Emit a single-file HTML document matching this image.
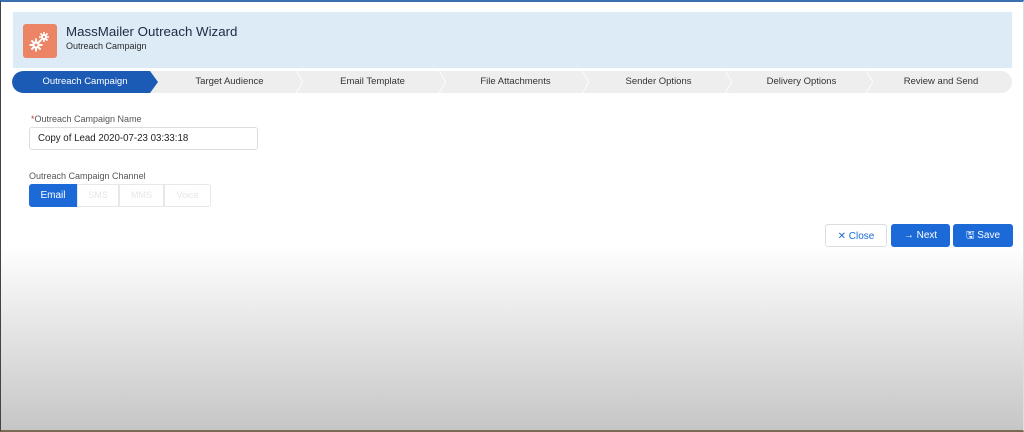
<!DOCTYPE html>
<html><head><style>
*{margin:0;padding:0;box-sizing:border-box}
body{width:1024px;height:432px;overflow:hidden;font-family:"Liberation Sans",sans-serif;position:relative;
background:linear-gradient(#fff 0,#fff 245px,#c6c6c6 430px);}
.frame{position:absolute;inset:0;border-left:1px solid #444;border-top:2px solid #3a6fb0;border-right:1px solid #ddd;border-bottom:2px solid #7a6a55}
.hdr{position:absolute;left:13px;top:12px;width:999px;height:56px;background:#dcebf5}
.ico{position:absolute;left:23px;top:24px;width:34px;height:34px;background:#ec8466;border-radius:3px}
.t1{position:absolute;left:66px;top:24px;font-size:13.3px;color:#1f2a44}
.t2{position:absolute;left:66px;top:41px;font-size:9px;color:#2b2b2b}
.path{position:absolute;left:12px;top:71px;width:1000px;height:22px;background:#eeeeee;border-radius:11px;overflow:hidden}
.step{position:absolute;top:0;height:22px;line-height:22px;font-size:9.5px;color:#333;text-align:center}
.act{position:absolute;left:0;top:0;height:22px;width:146px;background:#1c5bb5;border-radius:11px 0 0 11px;clip-path:polygon(0 0,138px 0,146px 11px,138px 22px,0 22px)}
.sep{position:absolute;top:0;width:8px;border-right:1.5px solid #fff;transform:skewX(30deg);height:11px}
.sep2{position:absolute;top:11px;width:8px;height:11px;border-right:1.5px solid #fff;transform:skewX(-30deg)}
.lbl{position:absolute;font-size:9px;color:#555}
.inp{position:absolute;left:29px;top:127px;width:229px;height:23px;border:1px solid #ddd;border-radius:3px;background:#fff;font-size:9.7px;line-height:21px;padding-left:8px;color:#222}
.seg{position:absolute;top:184px;height:23px;border:1px solid #e8e8e8;background:#fff;font-size:9px;line-height:21px;text-align:center;color:#e6e6e6}
.btn{position:absolute;top:224px;height:23px;border-radius:3px;font-size:10px;line-height:23px;text-align:center}
</style></head><body>
<div class="hdr"></div>
<div class="ico"><svg width="34" height="34" viewBox="0 0 34 34"><g stroke="#fff" stroke-width="2"><path d="M13 14.5v13M6.5 21h13M8.4 16.4l9.2 9.2M17.6 16.4l-9.2 9.2"/><path d="M21 8v10M16 13h10M17.5 9.5l7 7M24.5 9.5l-7 7" stroke-width="1.6"/></g><g fill="#fff"><circle cx="13" cy="21" r="3.6"/><circle cx="21" cy="13" r="2.8"/></g><g fill="#ec8466"><circle cx="13" cy="21" r="1.5"/><circle cx="21" cy="13" r="1.1"/></g></svg></div>
<div class="t1">MassMailer Outreach Wizard</div>
<div class="t2">Outreach Campaign</div>
<div class="path">
<div class="act"></div>
<div class="step" style="left:0;width:146px;color:#fff">Outreach Campaign</div>
<div class="step" style="left:146px;width:143px">Target Audience</div>
<div class="step" style="left:289px;width:143px">Email Template</div>
<div class="step" style="left:432px;width:143px">File Attachments</div>
<div class="step" style="left:575px;width:143px">Sender Options</div>
<div class="step" style="left:718px;width:143px">Delivery Options</div>
<div class="step" style="left:858px;width:142px">Review and Send</div>
<div class="sep" style="left:280px"></div><div class="sep2" style="left:280px"></div>
<div class="sep" style="left:423px"></div><div class="sep2" style="left:423px"></div>
<div class="sep" style="left:566px"></div><div class="sep2" style="left:566px"></div>
<div class="sep" style="left:709px"></div><div class="sep2" style="left:709px"></div>
<div class="sep" style="left:850px"></div><div class="sep2" style="left:850px"></div>
</div>
<div class="lbl" style="left:31px;top:114px"><span style="color:#c23934">*</span>Outreach Campaign Name</div>
<div class="inp">Copy of Lead 2020-07-23 03:33:18</div>
<div class="lbl" style="left:29px;top:171px">Outreach Campaign Channel</div>
<div class="seg" style="left:29px;width:48px;background:#1c6ad8;border-color:#1c6ad8;color:#fff;border-radius:3px 0 0 3px;font-size:10px">Email</div>
<div class="seg" style="left:77px;width:42px">SMS</div>
<div class="seg" style="left:119px;width:45px">MMS</div>
<div class="seg" style="left:164px;width:47px;border-radius:0 3px 3px 0">Voice</div>
<div class="btn" style="left:825px;width:62px;border:1px solid #ddd;background:#fff;color:#1c6ad8">✕ Close</div>
<div class="btn" style="left:891px;width:59px;background:#1c6ad8;color:#fff">→ Next</div>
<div class="btn" style="left:953px;width:60px;background:#1c6ad8;color:#fff">🖫 Save</div>
<div class="frame"></div>
</body></html>
